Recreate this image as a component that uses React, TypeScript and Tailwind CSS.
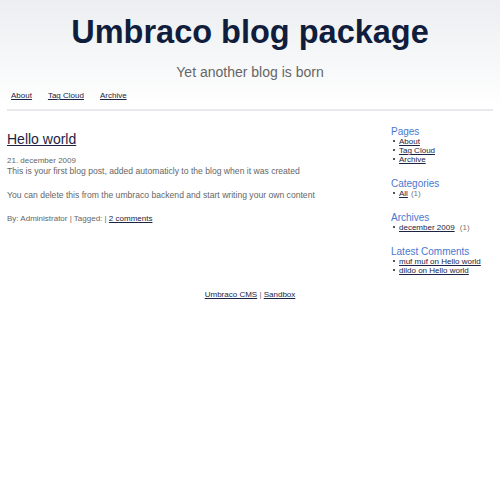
import React from "react";

const font = { fontFamily: '"Liberation Sans", Arial, sans-serif' };

function Bullet() {
  return <span className="inline-block w-[2px] h-[2px] bg-[#555] mr-[4px] mb-[2px] shrink-0" />;
}

function SideList({ items }: { items: { text: string; extra?: string }[] }) {
  return (
    <ul className="flex flex-col">
      {items.map((it) => (
        <li key={it.text} className="flex items-center text-[8px] leading-[9px] pl-[2px]">
          <Bullet />
          <a href="#" className="underline text-[#1b2442]">{it.text}</a>
          {it.extra && <span className="text-[#777] ml-[3px] whitespace-pre">{it.extra}</span>}
        </li>
      ))}
    </ul>
  );
}

function SideHead({ children }: { children: React.ReactNode }) {
  return <h3 className="text-[10px] leading-[11px] text-[#4a78cf]">{children}</h3>;
}

export default function App() {
  return (
    <div className="w-[500px] h-[500px] bg-white" style={font}>
      <div className="bg-gradient-to-b from-[#eceef1] to-white pt-[14px]">
        <h1 className="text-center text-[32.5px] leading-[37px] font-bold text-[#101d3c]">
          Umbraco blog package
        </h1>
        <p className="text-center text-[14px] leading-[16px] text-[#666] mt-[13px]">
          Yet another blog is born
        </p>
        <nav className="flex gap-[16px] pl-[11px] mt-[11px] pb-[8px] text-[8px] leading-[10px]">
          <a href="#" className="underline text-[#1b2442]">About</a>
          <a href="#" className="underline text-[#1b2442]">Tag Cloud</a>
          <a href="#" className="underline text-[#1b2442]">Archive</a>
        </nav>
      </div>
      <div className="mx-[7px] h-[2px] bg-[#e8e9ec]" />
      <div className="flex pl-[7px] pt-[20px]">
        <div className="flex-1">
          <h2 className="text-[14px] leading-[16px]">
            <a href="#" className="underline text-[#1b2442]">Hello world</a>
          </h2>
          <div className="mt-[9px] text-[8px] leading-[9px] text-[#666]">21. december 2009</div>
          <p className="mt-[1px] text-[8.6px] leading-[10px] text-[#666]">
            This is your first blog post, added automaticly to the blog when it was created
          </p>
          <p className="mt-[14px] text-[8.6px] leading-[10px] text-[#666]">
            You can delete this from the umbraco backend and start writing your own content
          </p>
          <p className="mt-[14px] text-[8px] leading-[10px] text-[#666]">
            By: Administrator | Tagged: |{" "}
            <a href="#" className="underline text-[#1b2442]">2 comments</a>
          </p>
        </div>
        <div className="w-[109px] flex flex-col gap-[14px] -mt-[5px]">
          <div>
            <SideHead>Pages</SideHead>
            <SideList items={[{ text: "About" }, { text: "Tag Cloud" }, { text: "Archive" }]} />
          </div>
          <div>
            <SideHead>Categories</SideHead>
            <SideList items={[{ text: "All", extra: "(1)" }]} />
          </div>
          <div>
            <SideHead>Archives</SideHead>
            <SideList items={[{ text: "december 2009", extra: " (1)" }]} />
          </div>
          <div>
            <SideHead>Latest Comments</SideHead>
            <SideList items={[{ text: "muf muf on Hello world" }, { text: "dildo on Hello world" }]} />
          </div>
        </div>
      </div>
      <div className="text-center text-[8px] leading-[10px] text-[#666] mt-[15px]">
        <a href="#" className="underline text-[#1b2442]">Umbraco CMS</a> |{" "}
        <a href="#" className="underline text-[#1b2442]">Sandbox</a>
      </div>
    </div>
  );
}
